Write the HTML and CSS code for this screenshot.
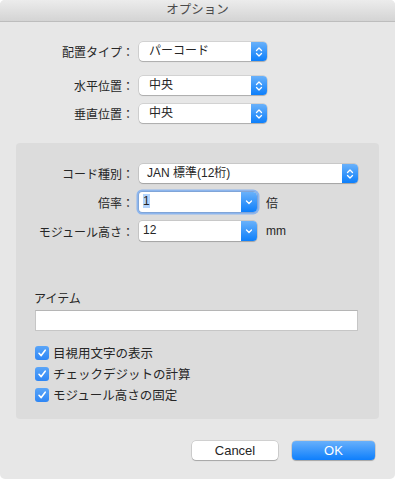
FILE: index.html
```html
<!doctype html>
<html>

<head>
    <meta charset="UTF-8" />
    <meta name="viewport" content="width=device-width, initial-scale=1.0" />
    <link rel="stylesheet" href="styles.css">
</head>

<body>
    <div class="window">
        <div class="titlebar">オプション</div>

        <div class="form form--top">
            <div class="row row--first">
                <span class="row__label">配置タイプ：</span>
                <div class="popup popup--short">
                    <span class="popup__value popup__value--wide">パーコード</span>
                    <span class="popup__arrow">
                        <svg width="8" height="12" viewBox="0 0 8 12"><path d="M1.5 4.5 L4 2 L6.5 4.5 M1.5 7.5 L4 10 L6.5 7.5" /></svg>
                    </span>
                </div>
            </div>
            <div class="row row--second">
                <span class="row__label">水平位置：</span>
                <div class="popup popup--short">
                    <span class="popup__value popup__value--wide">中央</span>
                    <span class="popup__arrow">
                        <svg width="8" height="12" viewBox="0 0 8 12"><path d="M1.5 4.5 L4 2 L6.5 4.5 M1.5 7.5 L4 10 L6.5 7.5" /></svg>
                    </span>
                </div>
            </div>
            <div class="row row--third">
                <span class="row__label">垂直位置：</span>
                <div class="popup popup--short">
                    <span class="popup__value popup__value--wide">中央</span>
                    <span class="popup__arrow">
                        <svg width="8" height="12" viewBox="0 0 8 12"><path d="M1.5 4.5 L4 2 L6.5 4.5 M1.5 7.5 L4 10 L6.5 7.5" /></svg>
                    </span>
                </div>
            </div>
        </div>

        <div class="group">
            <div class="form">
                <div class="row">
                    <span class="row__label row__label--inset">コード種別：</span>
                    <div class="popup popup--long">
                        <span class="popup__value popup__value--mid">JAN 標準(12桁)</span>
                        <span class="popup__arrow">
                            <svg width="8" height="12" viewBox="0 0 8 12"><path d="M1.5 4.5 L4 2 L6.5 4.5 M1.5 7.5 L4 10 L6.5 7.5" /></svg>
                        </span>
                    </div>
                </div>
                <div class="row row--combo">
                    <span class="row__label row__label--inset">倍率：</span>
                    <div class="popup popup--combo is-focused">
                        <span class="popup__value"><span class="selection">1</span></span>
                        <span class="popup__arrow">
                            <svg width="8" height="12" viewBox="0 0 8 12"><path d="M1.5 5 L4 7.5 L6.5 5" /></svg>
                        </span>
                    </div>
                    <span class="row__unit">倍</span>
                </div>
                <div class="row row--combo">
                    <span class="row__label row__label--inset">モジュール高さ：</span>
                    <div class="popup popup--combo">
                        <span class="popup__value">12</span>
                        <span class="popup__arrow">
                            <svg width="8" height="12" viewBox="0 0 8 12"><path d="M1.5 5 L4 7.5 L6.5 5" /></svg>
                        </span>
                    </div>
                    <span class="row__unit">mm</span>
                </div>
            </div>

            <div class="item">
                <p class="item__label">アイテム</p>
                <div class="textfield"></div>
            </div>

            <div class="checks">
                <label class="check"><span class="check__box"><svg width="10" height="10" viewBox="0 0 10 10"><path d="M2 5.3 L4.2 7.6 L8.2 2.2" /></svg></span>目視用文字の表示</label>
                <label class="check"><span class="check__box"><svg width="10" height="10" viewBox="0 0 10 10"><path d="M2 5.3 L4.2 7.6 L8.2 2.2" /></svg></span>チェックデジットの計算</label>
                <label class="check"><span class="check__box"><svg width="10" height="10" viewBox="0 0 10 10"><path d="M2 5.3 L4.2 7.6 L8.2 2.2" /></svg></span>モジュール高さの固定</label>
            </div>
        </div>

        <div class="actions">
            <button class="button">Cancel</button>
            <button class="button button--default">OK</button>
        </div>
    </div>
</body>

</html>
```

FILE: styles.css
```css
* {
    margin: 0;
    padding: 0;
    box-sizing: border-box;
}

body {
    background-color: #fff;
    color: #262626;
    font-family: "Liberation Sans", "Noto Sans CJK JP", sans-serif;
    font-size: 12px;
}

.window {
    width: 395px;
    height: 479px;
    background-color: #e7e7e7;
    border-radius: 5px;
    overflow: hidden;
}

.titlebar {
    height: 22px;
    line-height: 21px;
    text-align: center;
    font-size: 12.5px;
    color: #4a4a4a;
    background: linear-gradient(#ececec, #d4d4d4);
    border-bottom: 1px solid #bdbdbd;
}

.row {
    display: flex;
    align-items: center;
    height: 19px;
}

.row__label {
    width: 139px;
    padding-right: 5px;
    text-align: right;
    white-space: nowrap;
}

.row__label--inset {
    width: 123px;
}

.row__unit {
    margin-left: 9px;
}

.form--top {
    padding-top: 20px;
}

.row--second {
    margin-top: 15px;
}

.row--third {
    margin-top: 9px;
}

.row--combo {
    margin-top: 9px;
    height: 20px;
}

/* popup buttons and combo boxes */
.popup {
    display: flex;
    height: 100%;
    background-color: #fff;
    border-radius: 4px;
    box-shadow: 0 0 0 0.5px rgba(0, 0, 0, 0.18), 0 1px 1px rgba(0, 0, 0, 0.18);
}

.popup--short {
    width: 128px;
}

.popup--long {
    width: 219px;
}

.popup--combo {
    width: 118px;
    border-radius: 3px 4px 4px 3px;
}

.popup--combo.is-focused {
    box-shadow: 0 0 0 0.5px rgba(0, 0, 0, 0.18), 0 0 0 2.5px #8db6ee;
}

.popup__value {
    flex: 1;
    padding-left: 4px;
    line-height: 19px;
    white-space: nowrap;
}

.popup__value--wide {
    padding-left: 10px;
}

.popup__value--mid {
    padding-left: 8px;
}

.selection {
    background-color: #b3d4fd;
}

.popup__arrow {
    width: 16px;
    display: flex;
    align-items: center;
    justify-content: center;
    border-radius: 0 4px 4px 0;
    background: linear-gradient(#69b1fa, #0d7ffb);
}

.popup__arrow svg {
    fill: none;
    stroke: #fff;
    stroke-width: 1.3;
    stroke-linecap: round;
    stroke-linejoin: round;
}

/* grouped box */
.group {
    margin: 20px 16px 0;
    height: 276px;
    padding: 21px 21px 0 19px;
    background-color: #dcdcdc;
    border-radius: 4px;
}

.group .form {
    margin-left: -19px;
}

.item {
    margin-top: 50px;
}

.item__label {
    line-height: 17px;
    margin-left: -1px;
}

.textfield {
    margin-top: 2px;
    height: 21px;
    background-color: #fff;
    border: 1px solid #c6c6c6;
    border-top-color: #b5b5b5;
}

.checks {
    display: grid;
    row-gap: 4px;
    margin-top: 13px;
}

.check {
    display: flex;
    align-items: center;
    column-gap: 4px;
    height: 17px;
    font-size: 12.5px;
}

.check__box {
    width: 14px;
    height: 14px;
    display: flex;
    align-items: center;
    justify-content: center;
    border-radius: 3px;
    background: linear-gradient(#5aa5f8, #2e86f5);
}

.check__box svg {
    fill: none;
    stroke: #fff;
    stroke-width: 1.6;
    stroke-linecap: round;
    stroke-linejoin: round;
}

/* dialog buttons */
.actions {
    display: flex;
    justify-content: flex-end;
    column-gap: 14px;
    padding: 22px 20px 0;
}

.button {
    height: 19px;
    width: 86px;
    border: none;
    border-radius: 4px;
    font-family: inherit;
    font-size: 13px;
    color: #262626;
    background-color: #fff;
    box-shadow: 0 0 0 0.5px rgba(0, 0, 0, 0.2), 0 1px 1px rgba(0, 0, 0, 0.2);
}

.button--default {
    width: 83px;
    color: #fff;
    background: linear-gradient(#68b0fb, #0e7ffc);
}
```
